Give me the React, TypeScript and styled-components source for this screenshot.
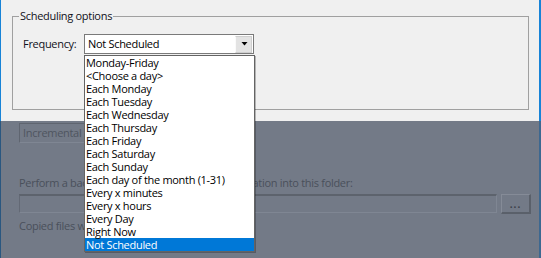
import React from "react";
import styled, { createGlobalStyle } from "styled-components";

const Global = createGlobalStyle`
  html, body { margin: 0; padding: 0; background: #f0f0f0; }
  body {
    font-family: "Open Sans", "Noto Sans", sans-serif;
    font-size: 11px;
    letter-spacing: -0.3px;
  }
`;

const Window = styled.div`
  position: relative;
  width: 541px;
  height: 258px;
  display: flex;
  flex-direction: column;
  overflow: hidden;
`;

const TopPanel = styled.div`
  height: 121px;
  box-sizing: border-box;
  background: #f0f0f0;
  border-left: 1px solid #1883d7;
  border-right: 2px solid #1883d7;
  padding: 9px 0 0 11px;
`;

const Group = styled.fieldset`
  margin: 0;
  padding: 0;
  width: 517px;
  height: 101px;
  box-sizing: border-box;
  border: 1px solid #a0a0a0;
  min-inline-size: 0;
`;

const Legend = styled.legend`
  margin-left: 6px;
  padding: 0 1px;
  line-height: 14px;
  color: #101020;
`;

const Row = styled.div`
  display: flex;
  align-items: center;
  margin: 11px 0 0 10px;
`;

const Label = styled.span`
  width: 61px;
  color: #101020;
  line-height: 20px;
`;

const Combo = styled.div`
  width: 170px;
  height: 20px;
  box-sizing: border-box;
  border: 1px solid #7a7a7a;
  background: #fff;
  display: flex;
  align-items: center;
  padding: 1px;
`;

const ComboText = styled.span`
  flex: 1;
  padding-left: 2px;
  color: #000;
  line-height: 16px;
`;

const DropButton = styled.div`
  width: 17px;
  height: 17px;
  box-sizing: border-box;
  background: #e3e3e3;
  border: 1px solid #cfcfcf;
  border-left-color: #fafafa;
  display: flex;
  align-items: center;
  justify-content: center;
  padding-left: 1px;
`;

const BottomPanel = styled.div`
  flex: 1;
  background: #737a87;
  border-left: 1px solid #2a5780;
  border-right: 2px solid #3d6890;
  padding: 2px 0 0 18px;
  display: flex;
  flex-direction: column;
  color: #4a505b;
`;

const DimCombo = styled.div`
  width: 130px;
  height: 20px;
  box-sizing: border-box;
  border: 1px solid #5f6570;
  border-right-color: #7f8693;
  border-bottom-color: #7f8693;
  padding-left: 3px;
  line-height: 18px;
  color: #4f5560;
  white-space: nowrap;
  overflow: hidden;
`;

const DimText = styled.div<{ $top: number }>`
  margin-top: ${(p) => p.$top}px;
  line-height: 14px;
  white-space: nowrap;
  color: #4a505b;
`;

const PathRow = styled.div`
  display: flex;
  gap: 4px;
  margin-top: 4px;
`;

const DimInput = styled.div`
  width: 478px;
  height: 19px;
  box-sizing: border-box;
  border: 1px solid #7f8693;
  border-top: 2px solid #5d636d;
  border-left-color: #636975;
`;

const DimButton = styled.div`
  width: 30px;
  height: 20px;
  box-sizing: border-box;
  border: 1px solid #858b97;
  border-right: 2px solid #5a606a;
  border-bottom: 2px solid #5a606a;
  display: flex;
  align-items: flex-end;
  justify-content: center;
  padding-bottom: 3px;
  color: #3a3f47;
  font-size: 10px;
  font-weight: 700;
  letter-spacing: 1px;
  line-height: 10px;
`;

const ListBox = styled.ul`
  position: absolute;
  left: 84px;
  top: 55px;
  width: 171px;
  margin: 0;
  padding: 0;
  list-style: none;
  box-sizing: border-box;
  background: #fff;
  border: 1px solid #646464;
  box-shadow: 1px 1px 0 rgba(0, 0, 0, 0.25);
`;

const Item = styled.li<{ $selected?: boolean }>`
  height: 13px;
  line-height: 13px;
  padding-left: 1px;
  white-space: nowrap;
  color: ${(p) => (p.$selected ? "#fff" : "#000")};
  background: ${(p) => (p.$selected ? "#0078d7" : "transparent")};
`;

const options = [
  "Monday-Friday",
  "<Choose a day>",
  "Each Monday",
  "Each Tuesday",
  "Each Wednesday",
  "Each Thursday",
  "Each Friday",
  "Each Saturday",
  "Each Sunday",
  "Each day of the month (1-31)",
  "Every x minutes",
  "Every x hours",
  "Every Day",
  "Right Now",
  "Not Scheduled",
];

export default function App() {
  const selected = "Not Scheduled";
  return (
    <>
      <Global />
      <Window>
        <TopPanel>
          <Group>
            <Legend>Scheduling options</Legend>
            <Row>
              <Label>Frequency:</Label>
              <Combo>
                <ComboText>{selected}</ComboText>
                <DropButton>
                  <svg width="7" height="4" viewBox="0 0 7 4">
                    <path d="M0.5 0H6.5L3.5 3.5Z" fill="#000" />
                  </svg>
                </DropButton>
              </Combo>
            </Row>
          </Group>
        </TopPanel>
        <BottomPanel>
          <DimCombo>Incremental mode</DimCombo>
          <DimText $top={33}>
            Perform a backup of every source file and destination into this folder:
          </DimText>
          <PathRow>
            <DimInput />
            <DimButton>...</DimButton>
          </PathRow>
          <DimText $top={5}>Copied files will be placed in this folder</DimText>
        </BottomPanel>
        <ListBox>
          {options.map((o) => (
            <Item key={o} $selected={o === selected}>
              {o}
            </Item>
          ))}
        </ListBox>
      </Window>
    </>
  );
}
